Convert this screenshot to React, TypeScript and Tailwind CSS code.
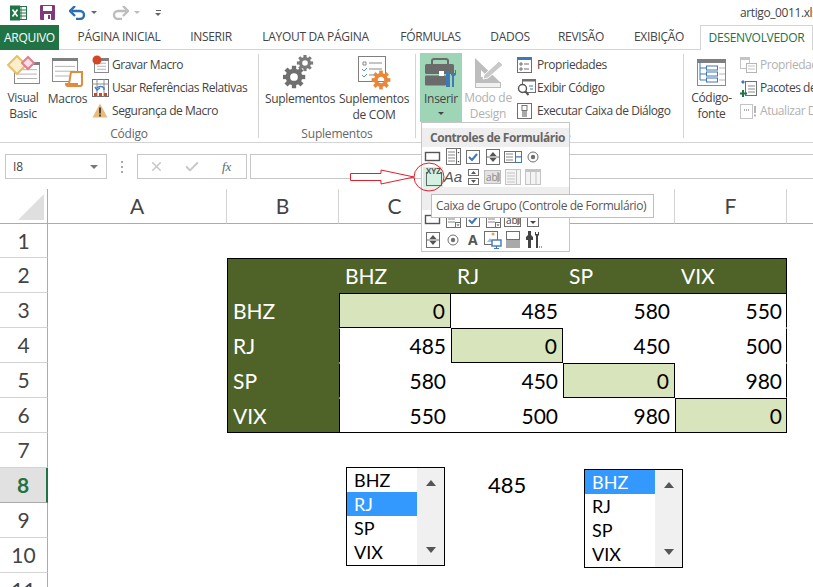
import type { ReactNode } from "react";
import { Check, X } from "lucide-react";

const ui = "font-['Open_Sans',sans-serif]";
const cell = "font-['Lato',sans-serif]";

const tabs = [
  { label: "PÁGINA INICIAL", w: "w-[114px]" },
  { label: "INSERIR", w: "w-[70px]" },
  { label: "LAYOUT DA PÁGINA", w: "w-[139px]" },
  { label: "FÓRMULAS", w: "w-[91px]" },
  { label: "DADOS", w: "w-[68px]" },
  { label: "REVISÃO", w: "w-[74px]" },
  { label: "EXIBIÇÃO", w: "w-[82px]" },
];

const cols = ["A", "B", "C", "D", "E", "F", "G"];
const cities = ["BHZ", "RJ", "SP", "VIX"];
const distances = [
  [0, 485, 580, 550],
  [485, 0, 450, 500],
  [580, 450, 0, 980],
  [550, 500, 980, 0],
];

function Gear({ x, y, r, color }: { x: number; y: number; r: number; color: string }) {
  const teeth = [0, 45, 90, 135, 180, 225, 270, 315];
  return (
    <g transform={`translate(${x} ${y})`}>
      {teeth.map((a) => (
        <rect key={a} x={-r * 0.24} y={-r * 1.25} width={r * 0.48} height={r * 0.6} fill={color} transform={`rotate(${a})`} />
      ))}
      <circle r={r * 0.68} fill="none" stroke={color} strokeWidth={r * 0.5} />
    </g>
  );
}

function MiniTable({ x, y, w, h, head = "#7f7f7f" }: { x: number; y: number; w: number; h: number; head?: string }) {
  const rows = [0.35, 0.55, 0.75];
  return (
    <g>
      <rect x={x + 0.5} y={y + 0.5} width={w - 1} height={h - 1} fill="#fff" stroke="#8a8a8a" />
      <rect x={x} y={y} width={w} height={3} fill={head} />
      {rows.map((r) => (
        <line key={r} x1={x + 3} x2={x + w - 3} y1={y + h * r} y2={y + h * r} stroke="#b5b5b5" />
      ))}
    </g>
  );
}

function VisualBasicIcon() {
  return (
    <svg width="34" height="32" viewBox="0 0 34 32">
      <MiniTable x={8} y={7} w={26} h={22} />
      <path d="M11 1 L20 10 L11 19 L2 10 Z" fill="#fbeecb" stroke="#e8bf6a" strokeWidth="2" />
      <path d="M22 2 L28 8 L22 14 L16 8 Z" fill="#fbdde2" stroke="#dc7f90" strokeWidth="2" />
    </svg>
  );
}

function MacrosIcon() {
  return (
    <svg width="34" height="32" viewBox="0 0 34 32">
      <MiniTable x={1} y={3} w={26} h={24} />
      <path d="M20 17 h11 v12 a2 2 0 0 1 -2 2 h-12 a2 2 0 0 1 -2 -2 h3 z" fill="#fff" stroke="#e08b3e" strokeWidth="2" />
      <rect x="15" y="28" width="12" height="3" fill="#e08b3e" />
    </svg>
  );
}

function RecordIcon() {
  return (
    <svg width="17" height="19" viewBox="0 0 17 19">
      <MiniTable x={2} y={3} w={15} h={15} />
      <circle cx="5" cy="5" r="4.5" fill="#d24726" />
    </svg>
  );
}

function RelativeIcon() {
  return (
    <svg width="17" height="18" viewBox="0 0 17 18">
      <rect x="0.5" y="0.5" width="16" height="17" fill="#fff" stroke="#6f6f6f" />
      <path d="M0 5h17M5 0v18M12 0v18" stroke="#8f8f8f" />
      <rect x="2" y="14" width="3" height="3" fill="#d24726" />
      <rect x="7" y="14" width="3" height="3" fill="#d24726" />
      <rect x="12" y="14" width="3" height="3" fill="#d24726" />
      <path d="M5 9 a4 3 0 0 1 7 0 v2 M3 8 l2 3 l3 -2" fill="none" stroke="#3f7fbf" strokeWidth="1.4" />
    </svg>
  );
}

function WarnIcon() {
  return (
    <svg width="16" height="15" viewBox="0 0 16 15">
      <path d="M8 0.5 L15.5 14.5 H0.5 Z" fill="#eabc7c" />
      <rect x="7" y="4.5" width="2" height="6" fill="#444" />
      <rect x="7" y="11.5" width="2" height="2" fill="#444" />
    </svg>
  );
}

function GearsIcon() {
  return (
    <svg width="34" height="36" viewBox="0 0 34 36">
      <Gear x={11} y={22} r={9} color="#6f6f6f" />
      <Gear x={22} y={8} r={6.5} color="#7a7a7a" />
    </svg>
  );
}

function ComIcon() {
  return (
    <svg width="34" height="36" viewBox="0 0 34 36">
      <rect x="1.5" y="1.5" width="27" height="25" fill="#fff" stroke="#7f7f7f" />
      <path d="M6 7h3v3h-3zM12 8h13M12 14h13M12 20h6" fill="none" stroke="#8a8a8a" />
      <path d="M5 14l2 2 3-3M5 20l2 2 3-3" fill="none" stroke="#5b8cc0" />
      <Gear x={24} y={25} r={7.5} color="#e8873a" />
    </svg>
  );
}

function InserirIcon() {
  return (
    <svg className="mt-[3px]" width="32" height="30" viewBox="0 0 32 30">
      <path d="M7 6 V3 a2 2 0 0 1 2 -2 h12 a2 2 0 0 1 2 2 v3" fill="none" stroke="#6b6b6b" strokeWidth="2" />
      <rect x="0" y="6" width="29" height="10" rx="1.5" fill="#6b6b6b" />
      <rect x="0" y="17.5" width="21" height="10" rx="1" fill="#6b6b6b" />
      <rect x="14" y="13" width="5" height="5" fill="#fff" />
      <path d="M21 13 h4 v16 h-4 z" fill="#3f78b5" />
      <path d="M26 12 v4 a2 2 0 0 0 1 2 v11 h2 v-11 a2 2 0 0 0 2 -2 v-4 l-1 0 v3 h-3 v-3 z" fill="#3f78b5" />
    </svg>
  );
}

function DesignIcon() {
  return (
    <svg className="mt-[2px]" width="32" height="32" viewBox="0 0 32 32">
      <path d="M3 1 V25 H28 Z M9 13 V20 H16 Z" fill="#bdbdbd" fillRule="evenodd" />
      <path d="M12 18 L27 4 L31 8 L16 21 L11 22 Z" fill="#c9c9c9" stroke="#fff" />
      <rect x="3.5" y="25.5" width="25" height="5" fill="#f1f1f1" stroke="#bdbdbd" />
    </svg>
  );
}

function PropsIcon() {
  return (
    <svg width="15" height="16" viewBox="0 0 15 16">
      <rect x="0.5" y="0.5" width="14" height="15" fill="#fff" stroke="#6f6f6f" />
      <rect x="0" y="0" width="15" height="3" fill="#3f78b5" />
      <path d="M3 6h2v2h-2zM3 11h2v2h-2zM7 7h5M7 12h5" fill="none" stroke="#6f6f6f" />
    </svg>
  );
}

function ViewCodeIcon() {
  return (
    <svg width="19" height="17" viewBox="0 0 19 17">
      <rect x="5.5" y="0.5" width="13" height="13" fill="#fff" stroke="#6f6f6f" />
      <rect x="5" y="0" width="14" height="2.5" fill="#6f6f6f" />
      <circle cx="5.5" cy="9.5" r="4" fill="#fff" stroke="#555" strokeWidth="1.4" />
      <path d="M8.5 12.5 L11.5 16" stroke="#555" strokeWidth="2" />
      <path d="M12 7h4M13 10h3" stroke="#3f78b5" />
    </svg>
  );
}

function RunDialogIcon() {
  return (
    <svg width="15" height="16" viewBox="0 0 15 16">
      <rect x="0.5" y="0.5" width="14" height="15" fill="#fff" stroke="#6f6f6f" />
      <rect x="5" y="2.5" width="5" height="5" fill="#fff" stroke="#777" />
      <rect x="5" y="8" width="5" height="6" fill="#a9a9a9" />
    </svg>
  );
}

function SourceIcon() {
  return (
    <svg className="mt-[4px]" width="30" height="28" viewBox="0 0 30 28">
      <rect x="0.5" y="0.5" width="28" height="26" fill="#fff" stroke="#8a8a8a" />
      <rect x="0" y="0" width="29" height="4" fill="#7f7f7f" />
      <path d="M3 3 V21 H9 M3 9 H9 M3 15 H9" fill="none" stroke="#3f78b5" />
      <rect x="9.5" y="7" width="11" height="4" fill="#fff" stroke="#3f78b5" />
      <rect x="9.5" y="13" width="11" height="4" fill="#fff" stroke="#3f78b5" />
      <rect x="9.5" y="19" width="11" height="4" fill="#fff" stroke="#3f78b5" />
      <path d="M22 9h6M22 15h6M22 21h6" stroke="#b5b5b5" />
    </svg>
  );
}

function XmlPropsIcon() {
  return (
    <svg width="17" height="16" viewBox="0 0 17 16">
      <rect x="0.5" y="0.5" width="9" height="11" fill="#fff" stroke="#c4c4c4" />
      <rect x="0" y="0" width="10" height="3" fill="#c4c4c4" />
      <rect x="6.5" y="6.5" width="10" height="9" fill="#fff" stroke="#b5b5b5" />
      <path d="M8 9h7M8 12h7" stroke="#c4c4c4" />
    </svg>
  );
}

function XmlPackIcon() {
  return (
    <svg width="17" height="18" viewBox="0 0 17 18">
      <rect x="5.5" y="2.5" width="11" height="14" fill="#fff" stroke="#6f6f6f" />
      <path d="M8 7h7M8 10h7M8 13h7" stroke="#8a8a8a" />
      <path d="M1 3l2-2 2 2-2 2z" fill="#3f78b5" />
      <path d="M3 11v7M0 14.5h7" stroke="#217346" strokeWidth="2" />
    </svg>
  );
}

function XmlRefreshIcon() {
  return (
    <svg width="17" height="17" viewBox="0 0 17 17">
      <rect x="0.5" y="2.5" width="12" height="14" fill="#fff" stroke="#c4c4c4" />
      <path d="M4 8h1M6 8h1M8 8h1" stroke="#b0b0b0" strokeWidth="2" />
      <rect x="14" y="4" width="2" height="7" fill="#b5b5b5" />
      <rect x="14" y="12.5" width="2" height="2" fill="#b5b5b5" />
    </svg>
  );
}

function LargeButton({ lines, icon, className = "", muted = false }: { lines: string[]; icon: ReactNode; className?: string; muted?: boolean }) {
  return (
    <div className={`flex h-[69px] flex-col items-center ${className}`}>
      <div className="flex h-[38px] items-start justify-center pt-[2px]">{icon}</div>
      {lines.map((l) => (
        <span key={l} className={`h-[16px] whitespace-nowrap text-[12px] leading-[16px] tracking-[-0.3px] ${muted ? "text-[#b1b1b1]" : "text-[#444]"}`}>
          {l}
        </span>
      ))}
    </div>
  );
}

function SmallButton({ label, icon, muted = false }: { label: string; icon: ReactNode; muted?: boolean }) {
  return (
    <div className="flex h-[23px] items-center">
      <div className="flex w-[20px] shrink-0 items-center">{icon}</div>
      <span className={`whitespace-nowrap text-[12px] tracking-[-0.45px] ${muted ? "text-[#b1b1b1]" : "text-[#444]"}`}>{label}</span>
    </div>
  );
}

function Group({ label, width, labelClass = "", children }: { label?: string; width: string; labelClass?: string; children: ReactNode }) {
  return (
    <div className={`flex h-full shrink-0 flex-col ${width}`}>
      <div className="flex flex-1 items-start pt-[3px]">{children}</div>
      <div className={`h-[20px] pt-[4px] text-center text-[12px] leading-[16px] tracking-[-0.2px] text-[#666] ${labelClass}`}>{label}</div>
    </div>
  );
}

const Sep = () => <div className="mt-[4px] h-[84px] w-px shrink-0 bg-[#d4d4d4]" />;

// Glyphs of the Controles de Formulário gallery
function GalleryIcon({ kind }: { kind: string }) {
  const g = "#6f6f6f";
  const body: Record<string, ReactNode> = {
    button: <rect x="2.5" y="5.5" width="14" height="8" fill="#fff" stroke="#555" strokeWidth="1.4" />,
    combo: (
      <g>
        <rect x="3.5" y="1.5" width="14" height="16" fill="#fff" stroke={g} />
        <path d="M5 5h7M5 8h7M5 11h7M5 14h7" stroke="#888" />
        <path d="M13.5 2v15" stroke={g} />
        <path d="M14.5 5h2l-1 1.5zM14.5 14h2l-1 1.5z" fill="#444" />
      </g>
    ),
    check: (
      <g>
        <rect x="3.5" y="3.5" width="13" height="13" fill="#fff" stroke={g} />
        <path d="M6 10l3 3 5-6" fill="none" stroke="#3f78b5" strokeWidth="2" />
      </g>
    ),
    spin: (
      <g>
        <rect x="3.5" y="2.5" width="13" height="15" fill="#fff" stroke={g} />
        <path d="M6.5 9l3.5-4 3.5 4zM6.5 11l3.5 4 3.5-4z" fill="#555" />
        <path d="M4 10h12" stroke={g} />
      </g>
    ),
    list: (
      <g>
        <rect x="1.5" y="4.5" width="17" height="11" fill="#fff" stroke={g} />
        <path d="M3 7h7M3 10h7M3 13h7" stroke="#888" />
        <rect x="12.5" y="4.5" width="6" height="5.5" fill="#fff" stroke="#3f78b5" />
        <rect x="12.5" y="10" width="6" height="5.5" fill="#fff" stroke="#3f78b5" />
      </g>
    ),
    radio: (
      <g>
        <circle cx="10" cy="10" r="5" fill="#fff" stroke={g} />
        <circle cx="10" cy="10" r="2.2" fill="#6f6f6f" />
      </g>
    ),
    smallspin: (
      <g>
        <rect x="5.5" y="2.5" width="10" height="6" fill="#fff" stroke={g} />
        <rect x="5.5" y="11.5" width="10" height="6" fill="#fff" stroke={g} />
        <path d="M8 7l2.5-3 2.5 3zM8 13l2.5 3 2.5-3z" fill="#555" />
      </g>
    ),
    abl: (
      <g>
        <rect x="1.5" y="3.5" width="16" height="13" fill="#e3e3e3" stroke="#bdbdbd" />
        <text x="3" y="13.5" fontSize="10" fontFamily="Open Sans, sans-serif" fill="#8a8a8a">abl</text>
        <path d="M15 5v10" stroke="#8a8a8a" />
      </g>
    ),
    comboOff: (
      <g>
        <rect x="2.5" y="2.5" width="15" height="15" fill="#f4f4f4" stroke="#c4c4c4" />
        <path d="M4 6h8M4 9h8M4 12h8M4 15h8" stroke="#c4c4c4" />
        <path d="M13.5 3v14" stroke="#c4c4c4" />
      </g>
    ),
    tableOff: (
      <g>
        <rect x="2.5" y="2.5" width="15" height="15" fill="#f4f4f4" stroke="#c4c4c4" />
        <rect x="2" y="2" width="16" height="3" fill="#c4c4c4" />
        <path d="M7.5 5v13M13 5v13" stroke="#c4c4c4" />
      </g>
    ),
    comboDrop: (
      <g>
        <rect x="3.5" y="2.5" width="14" height="15" fill="#fff" stroke={g} />
        <path d="M5 6h7M5 9h7M5 12h7" stroke="#888" />
        <rect x="12.5" y="12.5" width="5" height="5" fill="#fff" stroke={g} />
        <path d="M13.5 14.5h3l-1.5 1.5z" fill="#444" />
      </g>
    ),
    ablDark: (
      <g>
        <rect x="1.5" y="3.5" width="16" height="13" fill="#fff" stroke={g} />
        <text x="3" y="13.5" fontSize="10" fontFamily="Open Sans, sans-serif" fill="#444">abl</text>
        <path d="M15 5v10" stroke="#444" />
      </g>
    ),
    drop: (
      <g>
        <rect x="4.5" y="7.5" width="11" height="9" fill="#fff" stroke={g} />
        <path d="M7 11h6l-3 3z" fill="#444" />
      </g>
    ),
    label: <text x="5" y="15" fontSize="14" fontWeight="700" fontFamily="Open Sans, sans-serif" fill="#555">A</text>,
    image: (
      <g>
        <rect x="1.5" y="1.5" width="13" height="13" fill="#fff" stroke={g} />
        <path d="M4 12l3-4 3 4z" fill="#9dbfe0" />
        <circle cx="10" cy="4" r="1.5" fill="#e8a04a" />
        <rect x="9" y="10" width="9" height="6" fill="#fff" stroke="#3f78b5" strokeWidth="1.4" />
        <path d="M13.5 16v2M11 18.5h5" stroke="#3f78b5" />
      </g>
    ),
    toggle: (
      <g>
        <rect x="3.5" y="1.5" width="13" height="8" fill="#fff" stroke={g} />
        <rect x="3" y="10" width="14" height="8" fill="#a9a9a9" />
      </g>
    ),
    tools: (
      <g>
        <path d="M5 1v4l-2 2v3h2v8h3v-8h2V7L8 5V1z" fill="#444" />
        <path d="M12 2v3l1 1v12h2V6l1-1V2h-1v2h-2V2z" fill="#444" />
        <path d="M16 17h1M18 17h1" stroke="#444" />
      </g>
    ),
  };
  return (
    <svg width="20" height="20" viewBox="0 0 20 20">
      {body[kind]}
    </svg>
  );
}

function GalleryRow({ kinds }: { kinds: string[] }) {
  return (
    <div className="grid h-[20px] grid-cols-[repeat(6,20px)] pl-[1px]">
      {kinds.map((k, i) => (
        <GalleryIcon key={i} kind={k} />
      ))}
    </div>
  );
}

function InsertMenu() {
  return (
    <div className={`absolute left-[421px] top-[122px] z-10 h-[130px] w-[149px] border border-[#c6c6c6] bg-white pt-[5px] ${ui}`}>
      <div className="flex h-[19px] items-center whitespace-nowrap bg-[#eeeeee] pl-[8px] text-[12px] font-bold tracking-[-0.45px] text-[#666]">Controles de Formulário</div>
      <GalleryRow kinds={["button", "combo", "check", "spin", "list", "radio"]} />
      <div className="relative grid h-[20px] grid-cols-[repeat(6,20px)] pl-[1px]">
        <div className="bg-[#d3f0e0]">
          <svg width="20" height="20" viewBox="0 0 20 20">
            <rect x="3.5" y="5.5" width="15" height="13" fill="none" stroke="#666" />
            <rect x="5" y="1" width="12" height="7" fill="#d3f0e0" />
            <text x="10.5" y="7" textAnchor="middle" fontSize="8" fontWeight="700" fontFamily="Open Sans, sans-serif" fill="#555">XYZ</text>
          </svg>
        </div>
        <div className="text-center font-['Liberation_Sans',sans-serif] text-[15px] italic leading-[20px] text-[#555]">Aa</div>
        <GalleryIcon kind="smallspin" />
        <GalleryIcon kind="abl" />
        <GalleryIcon kind="comboOff" />
        <GalleryIcon kind="tableOff" />
      </div>
      <div className="h-[23px] bg-[#eeeeee]" />
      <GalleryRow kinds={["button", "comboDrop", "check", "comboDrop", "ablDark", "drop"]} />
      <GalleryRow kinds={["spin", "radio", "label", "image", "toggle", "tools"]} />
    </div>
  );
}

function Listbox({ selected, className }: { selected: string; className: string }) {
  return (
    <div className={`absolute z-[5] flex h-[99px] w-[99px] border border-black bg-white ${cell} ${className}`}>
      <div className="flex w-[70px] flex-col">
        {cities.map((c) => (
          <div key={c} className={`h-[24px] pl-[7px] text-[18px] leading-[25px] ${c === selected ? "bg-[#3399ff] text-white" : "text-black"}`}>
            {c}
          </div>
        ))}
      </div>
      <div className="flex flex-1 flex-col items-center justify-between bg-[#f0f0f0] py-[12px]">
        <div className="h-0 w-0 border-x-[5px] border-b-[6px] border-x-transparent border-b-[#555]" />
        <div className="h-0 w-0 border-x-[5px] border-t-[6px] border-x-transparent border-t-[#555]" />
      </div>
    </div>
  );
}

function Sheet() {
  const hdr = "flex items-center justify-center border-b border-r border-[#d4d4d4] bg-white";
  const head = `${cell} text-[21px] text-[#444]`;
  const rowHeights = "grid-rows-[35px_34px_35px_35px_35px_35px_35px_35px_35px_35px_35px_35px]";
  return (
    <div className={`grid flex-1 grid-cols-[48px_179px_112px_112px_112px_112px_112px_112px] overflow-hidden ${rowHeights} ${cell}`}>
      <div className="flex items-end justify-end border-b border-r border-[#ababab] pb-[3px] pr-[3px]">
        <div className="h-0 w-0 border-b-[26px] border-l-[26px] border-b-[#dfdfdf] border-l-transparent" />
      </div>
      {cols.map((c) => (
        <div key={c} className={`${head} flex items-center justify-center border-b border-r border-b-[#ababab] border-r-[#d4d4d4]`}>
          {c}
        </div>
      ))}

      {[1, 2, 3, 4, 5, 6, 7, 8, 9, 10, 11].map((n) => {
        const isActive = n === 8;
        return (
          <div key={n} className="contents">
            {isActive ? (
              <div className={`${cell} flex items-center justify-center border-b border-[#ababab] border-r-[2px] border-r-[#217346] bg-[#e1e1e1] text-[21px] font-bold text-[#217346]`}>{n}</div>
            ) : (
              <div className={`${head} ${hdr} border-r-[#ababab]`}>{n}</div>
            )}
            {n === 2 && (
              <>
                <div />
                <div className="col-span-5 grid grid-cols-[112px_112px_112px_112px_112px] border-x border-t border-black bg-[#4f6228] text-[21px] leading-[33px] text-white">
                  <div />
                  {cities.map((c) => (
                    <div key={c} className="pl-[5px]">{c}</div>
                  ))}
                </div>
                <div />
              </>
            )}
            {n >= 3 && n <= 6 && (
              <>
                <div />
                <div className={`border-l border-black bg-[#4f6228] pl-[5px] text-[21px] leading-[35px] text-white ${n === 6 ? "border-b" : ""}`}>{cities[n - 3]}</div>
                {distances[n - 3].map((d, i) => {
                  const diag = i === n - 3;
                  return (
                    <div
                      key={i}
                      className={`text-right text-[21px] leading-[33px] text-black ${i === 3 ? "pr-[4px]" : "pr-[5px]"} ${diag ? "border border-black bg-[#d8e4bc]" : "border-y border-transparent"} ${n === 6 && !diag ? "border-b-black" : ""} ${n === 3 && !diag ? "border-t-black" : ""} ${i === 3 && !diag ? "border-r border-r-black" : ""} ${i === 0 && !diag ? "border-l border-l-black" : ""}`}
                    >
                      {d}
                    </div>
                  );
                })}
                <div />
              </>
            )}
            {(n < 2 || n > 6) && <div className="col-span-7" />}
          </div>
        );
      })}
    </div>
  );
}

export default function App() {
  return (
    <div className={`relative flex h-[587px] w-[813px] flex-col overflow-hidden bg-white ${ui}`}>
      {/* title bar */}
      <div className="flex h-[25px] shrink-0 items-center pl-[10px]">
        <svg width="17" height="16" viewBox="0 0 17 16">
          <rect x="7" y="1.5" width="9.5" height="13" fill="#fff" stroke="#217346" />
          <path d="M7 5h9M7 8h9M7 11h9M11 2v12" stroke="#217346" />
          <rect x="0" y="0.5" width="10" height="15" fill="#217346" />
          <path d="M2.5 4.5l5 7M7.5 4.5l-5 7" stroke="#fff" strokeWidth="1.6" />
        </svg>
        <svg className="ml-[13px]" width="15" height="15" viewBox="0 0 15 15">
          <rect width="15" height="15" rx="1" fill="#80397b" />
          <rect x="3" y="1" width="9" height="5" fill="#fff" />
          <rect x="4" y="9" width="7" height="6" fill="#fff" />
          <rect x="8" y="10" width="2" height="4" fill="#80397b" />
        </svg>
        <svg className="ml-[14px]" width="17" height="14" viewBox="0 0 17 14">
          <path d="M3 5h8a4 4 0 0 1 0 8H7" fill="none" stroke="#2b6fb3" strokeWidth="2.4" />
          <path d="M6 0L1 5l5 5" fill="none" stroke="#2b6fb3" strokeWidth="2.4" />
        </svg>
        <div className="ml-[5px] h-0 w-0 border-x-[3px] border-t-[3px] border-x-transparent border-t-[#666]" />
        <svg className="ml-[15px]" width="17" height="14" viewBox="0 0 17 14">
          <path d="M14 5H6a4 4 0 0 0 0 8h4" fill="none" stroke="#bdbdbd" strokeWidth="2.4" />
          <path d="M11 0l5 5-5 5" fill="none" stroke="#bdbdbd" strokeWidth="2.4" />
        </svg>
        <div className="ml-[5px] h-0 w-0 border-x-[3px] border-t-[3px] border-x-transparent border-t-[#bdbdbd]" />
        <div className="ml-[15px] flex flex-col items-center gap-[2px]">
          <div className="h-px w-[5px] bg-[#666]" />
          <div className="h-0 w-0 border-x-[3px] border-t-[3px] border-x-transparent border-t-[#666]" />
        </div>
        <span className="ml-auto w-[73px] shrink-0 overflow-hidden whitespace-nowrap text-[12px] tracking-[-0.4px] text-[#444]">artigo_0011.xlsm</span>
      </div>

      {/* tabs */}
      <div className="flex h-[25px] shrink-0 border-b border-[#d4d4d4]">
        <div className="flex h-[25px] w-[59px] items-center justify-center bg-[#217346] text-[12px] tracking-[-0.3px] text-white">ARQUIVO</div>
        <div className="w-[3px]" />
        {tabs.map((t) => (
          <div key={t.label} className={`flex items-center justify-center whitespace-nowrap text-[12px] tracking-[-0.3px] text-[#444] ${t.w}`}>
            {t.label}
          </div>
        ))}
        <div className="flex h-[25px] flex-1 items-center justify-center whitespace-nowrap border-x border-t border-[#d4d4d4] bg-white text-[12px] tracking-[-0.3px] text-[#217346]">DESENVOLVEDOR</div>
      </div>

      {/* ribbon */}
      <div className="flex h-[93px] shrink-0 border-b border-[#d4d4d4]">
        <Group label="Código" width="w-[258px]">
          <LargeButton className="ml-[4px] w-[38px]" lines={["Visual", "Basic"]} icon={<VisualBasicIcon />} />
          <LargeButton className="ml-[5px] w-[41px]" lines={["Macros"]} icon={<MacrosIcon />} />
          <div className="ml-[4px] flex flex-col">
            <SmallButton label="Gravar Macro" icon={<RecordIcon />} />
            <SmallButton label="Usar Referências Relativas" icon={<RelativeIcon />} />
            <SmallButton label="Segurança de Macro" icon={<WarnIcon />} />
          </div>
        </Group>
        <Sep />
        <Group label="Suplementos" width="w-[156px]">
          <LargeButton className="ml-[4px] w-[74px]" lines={["Suplementos"]} icon={<GearsIcon />} />
          <LargeButton className="ml-[2px] w-[70px]" lines={["Suplementos", "de COM"]} icon={<ComIcon />} />
        </Group>
        <Sep />
        <Group label="Controles" width="w-[267px]" labelClass="pr-[10px]">
          <div className="ml-[4px] flex h-[69px] w-[42px] flex-col items-center bg-[#9fd5b7]">
            <div className="flex h-[38px] items-start justify-center pt-[2px]">
              <InserirIcon />
            </div>
            <span className="h-[16px] text-[12px] leading-[16px] tracking-[-0.3px] text-[#444]">Inserir</span>
            <div className="mt-[5px] h-0 w-0 border-x-[3px] border-t-[3px] border-x-transparent border-t-[#444]" />
          </div>
          <LargeButton className="ml-[1px] w-[50px]" muted lines={["Modo de", "Design"]} icon={<DesignIcon />} />
          <div className="ml-[4px] flex flex-col">
            <SmallButton label="Propriedades" icon={<PropsIcon />} />
            <SmallButton label="Exibir Código" icon={<ViewCodeIcon />} />
            <SmallButton label="Executar Caixa de Diálogo" icon={<RunDialogIcon />} />
          </div>
        </Group>
        <Sep />
        <Group width="w-[129px]">
          <LargeButton className="ml-[4px] w-[47px] shrink-0" lines={["Código-", "fonte"]} icon={<SourceIcon />} />
          <div className="ml-[5px] flex flex-col">
            <SmallButton muted label="Propriedades do Mapa" icon={<XmlPropsIcon />} />
            <SmallButton label="Pacotes de Expansão" icon={<XmlPackIcon />} />
            <SmallButton muted label="Atualizar Dados" icon={<XmlRefreshIcon />} />
          </div>
        </Group>
      </div>

      {/* formula bar */}
      <div className="flex h-[46px] shrink-0 items-start pt-[11px]">
        <div className="ml-[5px] flex h-[25px] w-[102px] items-center justify-between border border-[#c6c6c6] px-[7px] text-[12px] text-[#444]">
          I8
          <div className="mr-[1px] h-0 w-0 border-x-[4px] border-t-[4px] border-x-transparent border-t-[#777]" />
        </div>
        <div className="ml-[14px] flex h-[25px] w-[2px] flex-col items-center justify-center gap-[3px]">
          <div className="size-[2px] bg-[#aaa]" />
          <div className="size-[2px] bg-[#aaa]" />
          <div className="size-[2px] bg-[#aaa]" />
        </div>
        <div className="ml-[14px] flex h-[25px] w-[110px] items-center border border-[#c6c6c6]">
          <X size={15} strokeWidth={2.5} className="ml-[11px] text-[#c8c8c8]" />
          <Check size={16} strokeWidth={3} className="ml-[20px] text-[#c8c8c8]" />
          <span className="ml-[22px] font-['Liberation_Serif',serif] text-[13px] italic text-[#666]">fx</span>
        </div>
        <div className="ml-[3px] h-[25px] flex-1 border-y border-l border-[#c6c6c6]" />
      </div>

      <Sheet />

      <Listbox selected="RJ" className="left-[346px] top-[467px]" />
      <div className={`absolute left-[488px] top-[471px] text-[22px] leading-[28px] text-black ${cell}`}>485</div>
      <Listbox selected="BHZ" className="left-[584px] top-[469px]" />

      <InsertMenu />

      {/* arrow and circle marked on the picture */}
      <svg className="absolute left-[348px] top-[160px] z-20" width="100" height="34" viewBox="0 0 100 34">
        <path d="M2.5 13.5 H33 V10 L66 17 L33 24 V20.5 H2.5 Z" fill="#fff" stroke="#e0202a" />
        <ellipse cx="81" cy="17" rx="15" ry="14" fill="none" stroke="#e0202a" />
      </svg>

      <div className="absolute left-[431px] top-[194px] z-20 flex h-[24px] w-[223px] items-center border border-[#bebebe] bg-white pl-[4px] text-[12px] tracking-[-0.42px] text-[#575757]">
        Caixa de Grupo (Controle de Formulário)
      </div>
    </div>
  );
}
